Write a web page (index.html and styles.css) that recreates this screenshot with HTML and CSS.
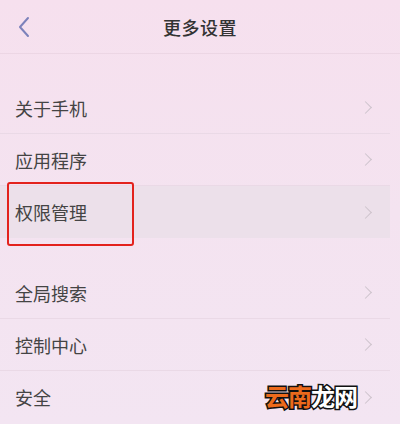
FILE: index.html
```html
<!DOCTYPE html>
<html lang="zh-CN">
<head>
  <meta charset="UTF-8">
  <meta name="viewport" content="width=device-width, initial-scale=1.0">
  <title>更多设置</title>
  <link rel="stylesheet" href="styles.css">
</head>
<body>

  <!-- HEADER -->
  <header class="topbar">
    <a href="#" class="back">
      <svg width="14" height="22" viewBox="0 0 14 22"><path d="M11 2 L3 11 L11 20" fill="none" stroke="#7c82bb" stroke-width="2" stroke-linecap="round" stroke-linejoin="round"/></svg>
    </a>
    <h1>更多设置</h1>
  </header>

  <!-- SETTINGS LIST -->
  <ul class="group">
    <li class="row"><span>关于手机</span><i class="arrow"></i></li>
    <li class="row"><span>应用程序</span><i class="arrow"></i></li>
    <li class="row active"><span>权限管理</span><i class="arrow"></i></li>
  </ul>

  <ul class="group">
    <li class="row"><span>全局搜索</span><i class="arrow"></i></li>
    <li class="row"><span>控制中心</span><i class="arrow"></i></li>
    <li class="row"><span>安全</span><i class="arrow"></i></li>
  </ul>

  <!-- annotation + watermark -->
  <div class="mark-box"></div>
  <div class="watermark"><span class="orange">云南</span><span class="white">龙网</span></div>

</body>
</html>
```

FILE: styles.css
```css
/* ===== PAGE ===== */
body {
  margin: 0;
  font-family: "Noto Sans CJK SC", "Noto Sans", sans-serif;
  background: linear-gradient(180deg, #f6e0ee 0%, #f4e3f0 50%, #f3e5f2 100%);
  color: #444;
  height: 424px;
  overflow: hidden;
  position: relative;
}

/* ===== HEADER ===== */
.topbar {
  height: 53px;
  display: flex;
  align-items: center;
  justify-content: center;
  position: relative;
  border-bottom: 1px solid #ecd6e4;
}
.topbar h1 {
  margin: 0;
  font-size: 18px;
  font-weight: 500;
  color: #333;
  letter-spacing: 0.5px;
}
.back {
  position: absolute;
  left: 17px;
  top: 16px;
  display: flex;
}

/* ===== LIST ===== */
.group {
  list-style: none;
  margin: 28px 0 0;
  padding: 0;
}
.group + .group {
  margin-top: 29px;
}
.row {
  height: 52px;
  box-sizing: border-box;
  display: flex;
  align-items: center;
  justify-content: space-between;
  padding: 0 18px 0 15px;
  margin-right: 10px;
  font-size: 18px;
  border-bottom: 1px solid #ead9e6;
}
.row:last-child {
  border-bottom: none;
}
.row.active {
  background: #ece0ea;
}
.arrow {
  width: 8px;
  height: 8px;
  border-top: 1.5px solid #cdc3cc;
  border-right: 1.5px solid #cdc3cc;
  transform: rotate(45deg);
  margin-right: 2px;
}

/* ===== OVERLAYS ===== */
.mark-box {
  position: absolute;
  left: 7px;
  top: 182px;
  width: 123px;
  height: 60px;
  border: 2px solid #e3221d;
  border-radius: 3px;
}
.watermark {
  position: absolute;
  left: 265px;
  top: 378px;
  font-size: 24px;
  font-weight: bold;
  letter-spacing: -1px;
  -webkit-text-stroke: 3px #111;
  paint-order: stroke fill;
}
.watermark .orange {
  color: #ec6a1c;
}
.watermark .white {
  color: #fff;
}
```
